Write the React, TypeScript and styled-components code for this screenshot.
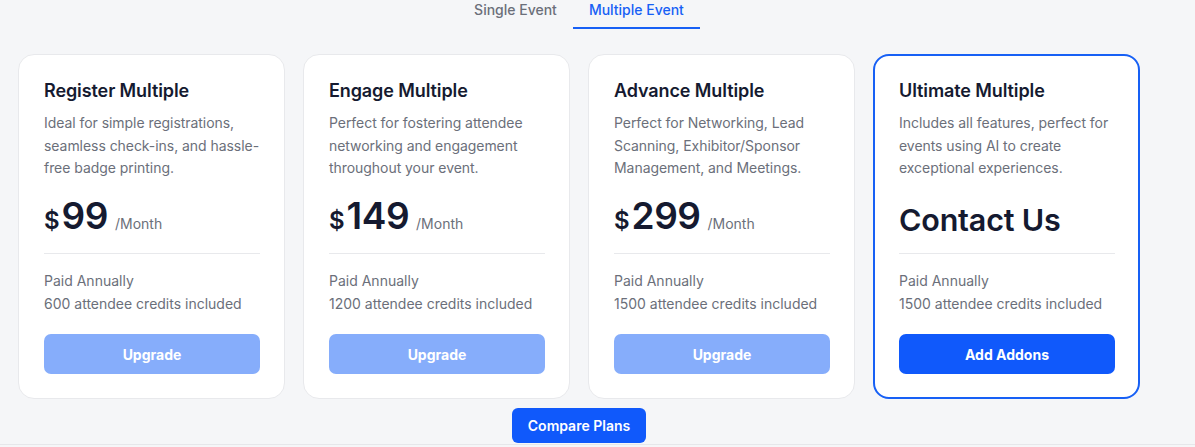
import React, { useState } from 'react';
import styled, { createGlobalStyle } from 'styled-components';

const GlobalStyle = createGlobalStyle`
  html, body {
    margin: 0;
    padding: 0;
    background: #f5f6f8;
    font-family: Inter, "Noto Sans", sans-serif;
    -webkit-font-smoothing: antialiased;
  }
  * { box-sizing: border-box; }
`;

interface Plan {
  name: string;
  description: string;
  price?: string;
  credits: string;
  action: string;
  featured?: boolean;
}

const PLANS: Plan[] = [
  {
    name: 'Register Multiple',
    description: 'Ideal for simple registrations, seamless check-ins, and hassle-free badge printing.',
    price: '99',
    credits: '600 attendee credits included',
    action: 'Upgrade',
  },
  {
    name: 'Engage Multiple',
    description: 'Perfect for fostering attendee networking and engagement throughout your event.',
    price: '149',
    credits: '1200 attendee credits included',
    action: 'Upgrade',
  },
  {
    name: 'Advance Multiple',
    description: 'Perfect for Networking, Lead Scanning, Exhibitor/Sponsor Management, and Meetings.',
    price: '299',
    credits: '1500 attendee credits included',
    action: 'Upgrade',
  },
  {
    name: 'Ultimate Multiple',
    description: 'Includes all features, perfect for events using AI to create exceptional experiences.',
    credits: '1500 attendee credits included',
    action: 'Add Addons',
    featured: true,
  },
];

const Shell = styled.div`
  border-bottom: 1px solid #e6e7ea;
  padding-bottom: 1px;
`;

const Page = styled.div`
  width: 1122px;
  margin-left: 18px;
  display: flex;
  flex-direction: column;
  align-items: center;
`;

const Tabs = styled.div`
  display: flex;
  height: 29px;
`;

const Tab = styled.button<{ $active: boolean }>`
  border: none;
  background: none;
  padding: 0 16px 9px;
  font-family: inherit;
  font-size: 14px;
  font-weight: 500;
  line-height: 20px;
  height: 29px;
  color: ${p => (p.$active ? '#1760f5' : '#6b6f7a')};
  border-bottom: 2px solid ${p => (p.$active ? '#1760f5' : 'transparent')};
  cursor: pointer;
`;

const Grid = styled.div`
  display: grid;
  grid-template-columns: repeat(4, 267px);
  gap: 18px;
  margin-top: 25px;
`;

const Card = styled.div<{ $featured: boolean }>`
  height: 345px;
  background: #ffffff;
  border-radius: 16px;
  border: ${p => (p.$featured ? '2px solid #1760f5' : '1px solid #e8e9ec')};
  padding: ${p => (p.$featured ? '23px 23px 0 24px' : '24px 24px 0 25px')};
  display: flex;
  flex-direction: column;
`;

const Title = styled.h3`
  margin: 0;
  font-size: 18px;
  font-weight: 600;
  line-height: 24px;
  letter-spacing: -0.1px;
  color: #151a30;
`;

const Description = styled.p`
  margin: 9px 0 0;
  font-size: 14px;
  line-height: 22.5px;
  letter-spacing: -0.05px;
  color: #6b6f7a;
  height: 68px;
`;

const PriceRow = styled.div`
  display: flex;
  align-items: baseline;
  height: 46px;
  margin-top: 13px;
  color: #151a30;
`;

const Currency = styled.span`
  font-size: 24px;
  font-weight: 600;
`;

const Amount = styled.span`
  font-size: 37px;
  font-weight: 600;
  letter-spacing: -0.5px;
  margin-left: 2px;
`;

const Period = styled.span`
  font-size: 14px;
  color: #6b6f7a;
  margin-left: 7px;
`;

const ContactText = styled.span`
  font-size: 30.5px;
  font-weight: 600;
  letter-spacing: -0.2px;
  margin-top: 8px;
`;

const Divider = styled.hr`
  border: none;
  border-top: 1px solid #e8e9ec;
  margin: 14px 0 0;
`;

const Meta = styled.div`
  margin-top: 15px;
  font-size: 14px;
  line-height: 23px;
  color: #6b6f7a;
`;

const ActionButton = styled.button<{ $primary: boolean }>`
  margin-top: 19px;
  height: 40px;
  width: 100%;
  border: none;
  border-radius: 7px;
  background: ${p => (p.$primary ? '#1059fb' : '#86adfb')};
  color: #ffffff;
  font-family: inherit;
  font-size: 14px;
  font-weight: 700;
  cursor: pointer;
`;

const CompareButton = styled.button`
  margin-top: 9px;
  height: 35px;
  padding: 0 16px;
  border: none;
  border-radius: 6px;
  background: #1059fb;
  color: #ffffff;
  font-family: inherit;
  font-size: 14px;
  font-weight: 600;
  cursor: pointer;
`;

const PlanCard: React.FC<{ plan: Plan }> = ({ plan }) => (
  <Card $featured={!!plan.featured}>
    <Title>{plan.name}</Title>
    <Description>{plan.description}</Description>
    <PriceRow>
      {plan.price ? (
        <>
          <Currency>$</Currency>
          <Amount>{plan.price}</Amount>
          <Period>/Month</Period>
        </>
      ) : (
        <ContactText>Contact Us</ContactText>
      )}
    </PriceRow>
    <Divider />
    <Meta>
      <div>Paid Annually</div>
      <div>{plan.credits}</div>
    </Meta>
    <ActionButton $primary={!!plan.featured}>{plan.action}</ActionButton>
  </Card>
);

const App: React.FC = () => {
  const [tab, setTab] = useState<'single' | 'multiple'>('multiple');

  return (
    <>
      <GlobalStyle />
      <Shell>
        <Page>
          <Tabs>
            <Tab $active={tab === 'single'} onClick={() => setTab('single')}>
              Single Event
            </Tab>
            <Tab $active={tab === 'multiple'} onClick={() => setTab('multiple')}>
              Multiple Event
            </Tab>
          </Tabs>
          <Grid>
            {PLANS.map(plan => (
              <PlanCard key={plan.name} plan={plan} />
            ))}
          </Grid>
          <CompareButton>Compare Plans</CompareButton>
        </Page>
      </Shell>
    </>
  );
};

export default App;
